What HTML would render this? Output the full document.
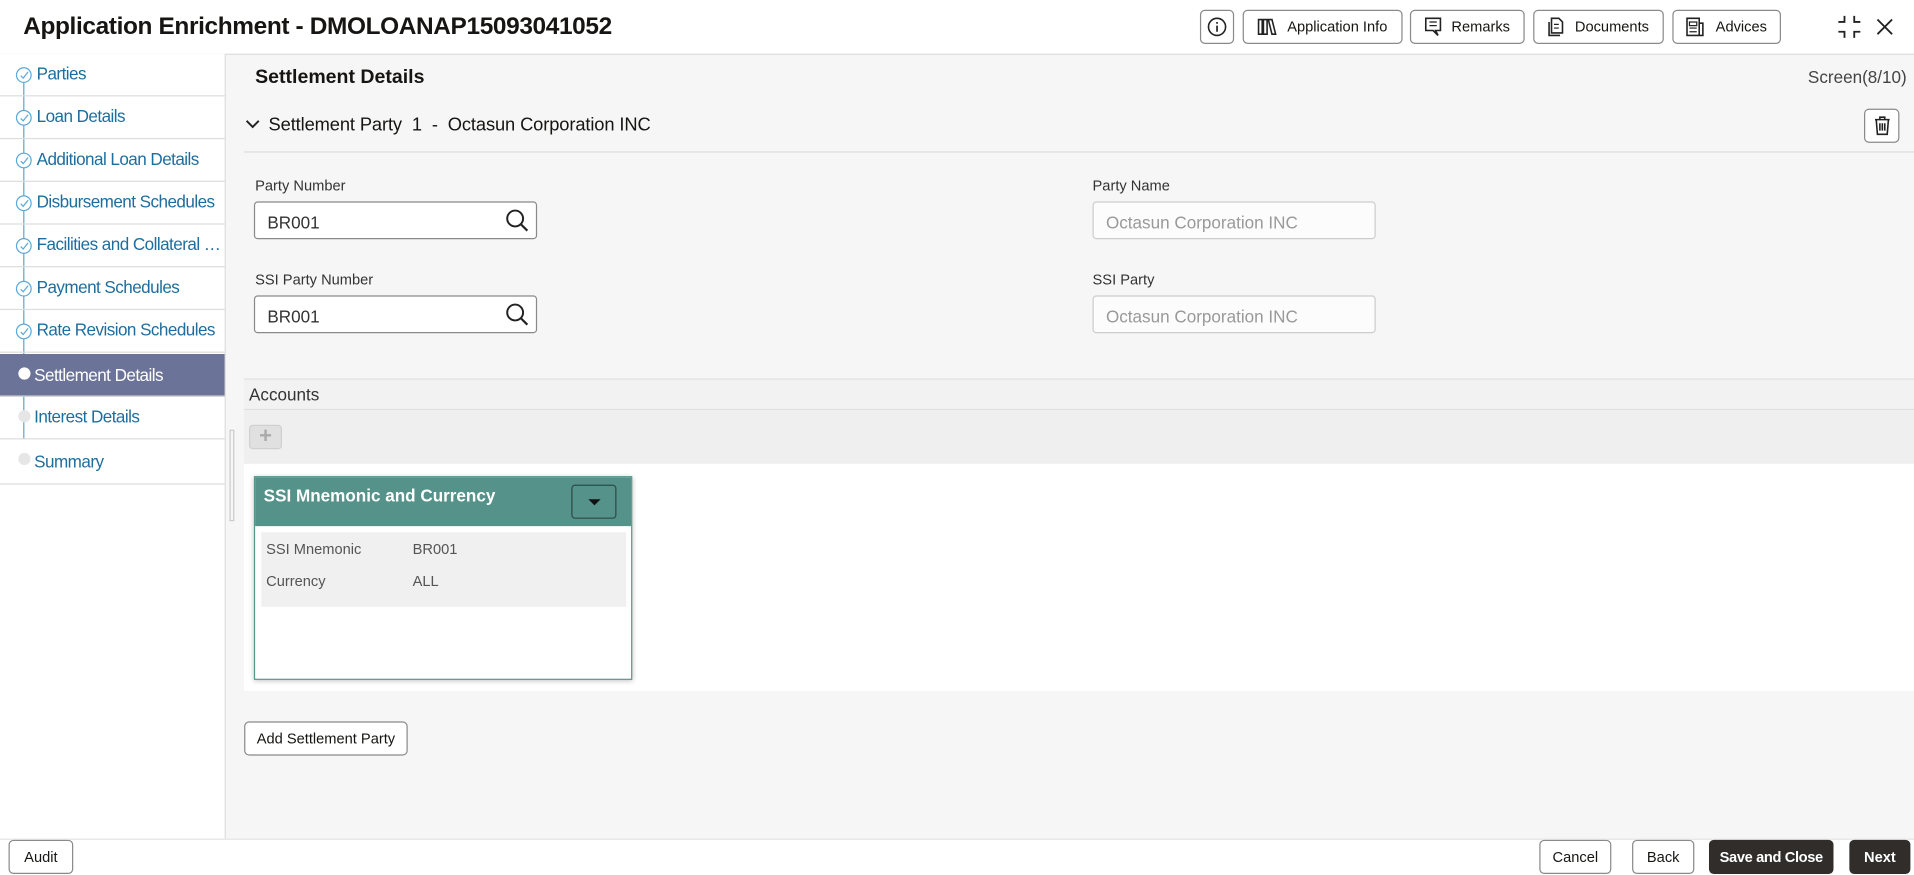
<!DOCTYPE html>
<html><head><meta charset="utf-8"><style>
html,body{margin:0;padding:0;width:1914px;height:874px;overflow:hidden;background:#f6f6f6}
#s{position:absolute;left:0;top:0;width:1568px;height:716px;transform:scale(1.2207);transform-origin:0 0;font-family:"Liberation Sans",sans-serif;color:#161513}
.a{position:absolute}
.btn{position:absolute;border:1px solid #8a8a8a;border-radius:4px;background:#fff;font-size:12px;display:flex;align-items:center;justify-content:center;box-sizing:border-box;gap:8px;white-space:nowrap}
.nav{position:absolute;left:0;width:184px;height:35px;border-bottom:1px solid #ddd;box-sizing:border-box;font-size:14px;color:#1d6e9e;white-space:nowrap;letter-spacing:-0.45px}
.nav span{position:absolute;left:30px;top:8px}
.dot{position:absolute;left:13px;top:11px;width:13px;height:13px;border:1px solid #5aa8d8;border-radius:50%;box-sizing:border-box;background:#fff}
.dot svg{position:absolute;left:2px;top:2px}
.lbl{position:absolute;font-size:12px;color:#333}
.inp{position:absolute;width:232px;height:31px;border:1px solid #8a8a8a;border-radius:3px;background:#fff;box-sizing:border-box;font-size:14px;padding:8px 10px;color:#333}
.dis{border-color:#ccc;color:#999;background:#fcfcfc}
</style></head><body><div id="s">
<div class="a" style="left:0;top:0;width:1568px;height:44px;background:#fff;border-bottom:1px solid #ddd"></div>
<div class="a" style="left:19px;top:11px;font-size:20px;font-weight:bold;letter-spacing:-0.3px">Application Enrichment - DMOLOANAP15093041052</div>
<div class="btn" style="left:983px;top:8px;width:28px;height:28px"><svg width="16" height="16" viewBox="0 0 16 16"><circle cx="8" cy="8" r="7" fill="none" stroke="#222" stroke-width="1.3"/><path d="M8 7v5M8 4v1.5" stroke="#222" stroke-width="1.4"/></svg></div>
<div class="btn" style="left:1018px;top:8px;width:131px;height:28px"><svg width="16" height="14"><path d="M1 1h3v12H1zM5 1h3v12H5zM9 1l3 0 3 12h-3z" fill="none" stroke="#222" stroke-width="1.3"/></svg>Application Info</div>
<div class="btn" style="left:1155px;top:8px;width:94px;height:28px"><svg width="14" height="16"><path d="M1 1h12v10h-4l2 4-4-4H1z" fill="none" stroke="#222" stroke-width="1.3"/><path d="M4 4h6M4 7h6" stroke="#222"/></svg>Remarks</div>
<div class="btn" style="left:1256px;top:8px;width:107px;height:28px"><svg width="14" height="16"><path d="M3 1h6l3 3v9H3zM1 4v11h9" fill="none" stroke="#222" stroke-width="1.3"/><path d="M5 6h4M5 9h4" stroke="#222"/></svg>Documents</div>
<div class="btn" style="left:1370px;top:8px;width:89px;height:28px"><svg width="16" height="16"><path d="M1 1h10v14H1zM11 5h3v10h-3" fill="none" stroke="#222" stroke-width="1.3"/><path d="M3 4h6v3H3zM3 9h6M3 12h6" fill="none" stroke="#222"/></svg>Advices</div>
<svg class="a" style="left:1505px;top:12px" width="20" height="20"><path d="M6 1v5H1M14 1v5h5M6 19v-5H1M14 19v-5h5" fill="none" stroke="#222" stroke-width="1.5"/></svg>
<svg class="a" style="left:1537px;top:15px" width="14" height="14"><path d="M1 1l12 12M13 1L1 13" stroke="#222" stroke-width="1.5"/></svg>
<div class="a" style="left:0;top:44px;width:184px;height:643px;background:#fff;border-right:1px solid #ddd"></div>
<div class="a" style="left:19px;top:60px;width:1px;height:300px;background:#5aa8d8"></div>
<div class="nav" style="top:44px"><div class="dot"><svg width="8" height="8"><path d="M1 4l2 2 4-5" fill="none" stroke="#5aa8d8" stroke-width="1"/></svg></div><span>Parties</span></div>
<div class="nav" style="top:79px"><div class="dot"><svg width="8" height="8"><path d="M1 4l2 2 4-5" fill="none" stroke="#5aa8d8" stroke-width="1"/></svg></div><span>Loan Details</span></div>
<div class="nav" style="top:114px"><div class="dot"><svg width="8" height="8"><path d="M1 4l2 2 4-5" fill="none" stroke="#5aa8d8" stroke-width="1"/></svg></div><span>Additional Loan Details</span></div>
<div class="nav" style="top:149px"><div class="dot"><svg width="8" height="8"><path d="M1 4l2 2 4-5" fill="none" stroke="#5aa8d8" stroke-width="1"/></svg></div><span>Disbursement Schedules</span></div>
<div class="nav" style="top:184px"><div class="dot"><svg width="8" height="8"><path d="M1 4l2 2 4-5" fill="none" stroke="#5aa8d8" stroke-width="1"/></svg></div><span>Facilities and Collateral …</span></div>
<div class="nav" style="top:219px"><div class="dot"><svg width="8" height="8"><path d="M1 4l2 2 4-5" fill="none" stroke="#5aa8d8" stroke-width="1"/></svg></div><span>Payment Schedules</span></div>
<div class="nav" style="top:254px"><div class="dot"><svg width="8" height="8"><path d="M1 4l2 2 4-5" fill="none" stroke="#5aa8d8" stroke-width="1"/></svg></div><span>Rate Revision Schedules</span></div>
<div class="nav" style="top:290px;background:#6b7398;color:#fff;height:35px"><div class="dot" style="left:15px;width:10px;height:10px;border:none;background:#fff"></div><span style="left:28px;top:9px">Settlement Details</span></div>
<div class="nav" style="top:325px"><div class="dot" style="left:15px;width:10px;height:10px;border:none;background:#e6e6e6"></div><span style="left:28px">Interest Details</span></div>
<div class="nav" style="top:360px;height:37px"><div class="dot" style="left:15px;width:10px;height:10px;border:none;background:#e6e6e6"></div><span style="left:28px;top:10px">Summary</span></div>
<div class="a" style="left:188px;top:352px;width:4px;height:75px;border:1px solid #ccc;box-sizing:border-box"></div>
<div class="a" style="left:209px;top:55px;font-size:16px;font-weight:bold">Settlement Details</div>
<div class="a" style="right:6px;top:55px;font-size:14px;color:#444">Screen(8/10)</div>
<svg class="a" style="left:201px;top:98px" width="12" height="8"><path d="M1 1l5 5 5-5" fill="none" stroke="#222" stroke-width="1.6"/></svg>
<div class="a" style="left:220px;top:94px;font-size:15px;letter-spacing:-0.1px">Settlement Party&nbsp; 1&nbsp; -&nbsp; Octasun Corporation INC</div>
<div class="btn" style="left:1527px;top:89px;width:29px;height:28px"><svg width="14" height="16"><path d="M1 3h12M5 3V1h4v2M2 3l1 12h8l1-12M5 6v6M7 6v6M9 6v6" fill="none" stroke="#222" stroke-width="1.3"/></svg></div>
<div class="a" style="left:200px;top:124px;width:1368px;height:1px;background:#ddd"></div>
<div class="lbl" style="left:209px;top:145px">Party Number</div>
<div class="inp" style="left:208px;top:165px">BR001</div>
<svg class="a" style="left:414px;top:171px" width="20" height="20"><circle cx="8" cy="8" r="6.5" fill="none" stroke="#222" stroke-width="1.6"/><path d="M13 13l5 5" stroke="#222" stroke-width="1.8"/></svg>
<div class="lbl" style="left:895px;top:145px">Party Name</div>
<div class="inp dis" style="left:895px;top:165px">Octasun Corporation INC</div>
<div class="lbl" style="left:209px;top:222px">SSI Party Number</div>
<div class="inp" style="left:208px;top:242px">BR001</div>
<svg class="a" style="left:414px;top:248px" width="20" height="20"><circle cx="8" cy="8" r="6.5" fill="none" stroke="#222" stroke-width="1.6"/><path d="M13 13l5 5" stroke="#222" stroke-width="1.8"/></svg>
<div class="lbl" style="left:895px;top:222px">SSI Party</div>
<div class="inp dis" style="left:895px;top:242px">Octasun Corporation INC</div>
<div class="a" style="left:200px;top:310px;width:1368px;height:26px;background:#f2f2f2;border-top:1px solid #e0e0e0;border-bottom:1px solid #e0e0e0;box-sizing:border-box"></div>
<div class="a" style="left:204px;top:315px;font-size:14px;color:#333">Accounts</div>
<div class="a" style="left:200px;top:336px;width:1368px;height:44px;background:#efefef"></div>
<div class="a" style="left:204px;top:348px;width:27px;height:20px;background:#e0e0e0;border:1px solid #d0d0d0;border-radius:3px;box-sizing:border-box;color:#aaa;font-size:18px;font-weight:bold;text-align:center;line-height:17px">+</div>
<div class="a" style="left:200px;top:380px;width:1368px;height:186px;background:#fff"></div>
<div class="a" style="left:208px;top:390px;width:310px;height:167px;border:1px solid #5a958d;background:#fff;box-sizing:border-box;box-shadow:0 1px 4px rgba(0,0,0,.25)"></div>
<div class="a" style="left:209px;top:391px;width:308px;height:40px;background:#54928a"></div>
<div class="a" style="left:216px;top:398px;font-size:14px;font-weight:bold;color:#fff">SSI Mnemonic and Currency</div>
<div class="a" style="left:468px;top:397px;width:37px;height:28px;border:1px solid #2f4a46;border-radius:3px;box-sizing:border-box"><div style="position:absolute;left:13px;top:11px;border-left:5px solid transparent;border-right:5px solid transparent;border-top:5px solid #111"></div></div>
<div class="a" style="left:214px;top:436px;width:299px;height:61px;background:#f0f0f0"></div>
<div class="a" style="left:218px;top:443px;font-size:12px;color:#555">SSI Mnemonic</div>
<div class="a" style="left:338px;top:443px;font-size:12px;color:#555">BR001</div>
<div class="a" style="left:218px;top:469px;font-size:12px;color:#555">Currency</div>
<div class="a" style="left:338px;top:469px;font-size:12px;color:#555">ALL</div>
<div class="btn" style="left:200px;top:591px;width:134px;height:28px">Add Settlement Party</div>
<div class="a" style="left:0;top:687px;width:1568px;height:29px;background:#fff;border-top:1px solid #e4e4e4"></div>
<div class="btn" style="left:7px;top:688px;width:53px;height:28px">Audit</div>
<div class="btn" style="left:1261px;top:688px;width:59px;height:28px">Cancel</div>
<div class="btn" style="left:1337px;top:688px;width:51px;height:28px">Back</div>
<div class="btn" style="left:1400px;top:688px;width:102px;height:28px;background:#312d2a;border-color:#312d2a;color:#fff;font-weight:bold;letter-spacing:-0.3px">Save and Close</div>
<div class="btn" style="left:1515px;top:688px;width:50px;height:28px;background:#312d2a;border-color:#312d2a;color:#fff;font-weight:bold">Next</div>
</div></body></html>
